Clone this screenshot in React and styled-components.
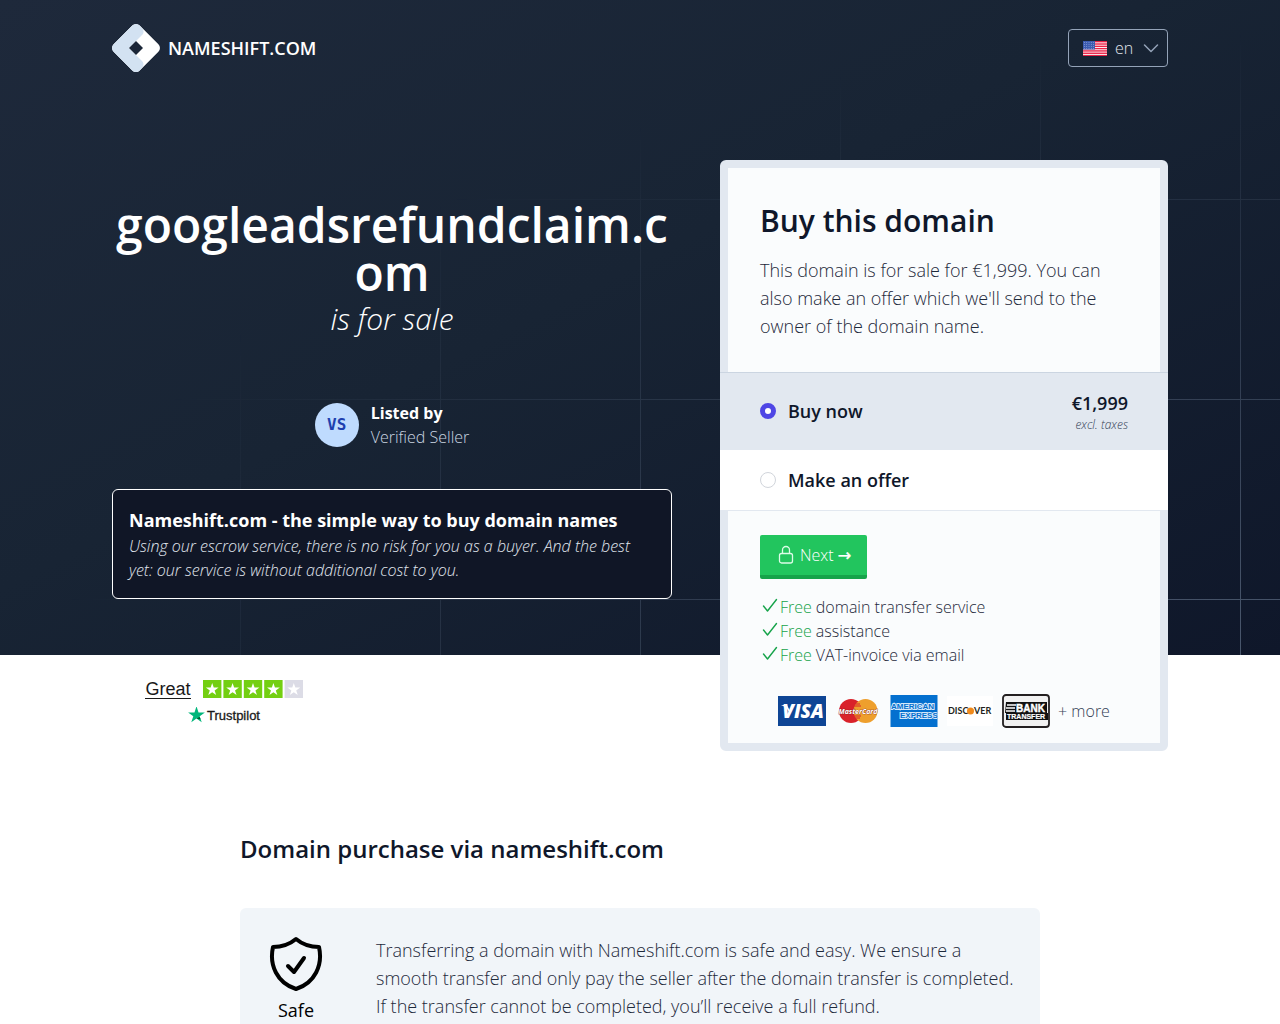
import React, { useState } from "react";
import styled, { createGlobalStyle } from "styled-components";

const GlobalStyle = createGlobalStyle`
  *, *::before, *::after {
    box-sizing: border-box;
  }
  body {
    margin: 0;
    background: #fff;
    color: #0f172a;
    font-family: "Open Sans", "Noto Sans", sans-serif;
    font-size: 16px;
    font-weight: 300;
    line-height: 24px;
  }
  h1, h2, h3, p, ul {
    margin: 0;
    padding: 0;
  }
`;

const Container = styled.div`
  max-width: 1120px;
  margin: 0 auto;
  padding: 0 32px;
`;

const Hero = styled.section`
  position: relative;
  background: linear-gradient(to bottom right, #1e293b, #182434 45%, #0f172a);

  &::before {
    content: "";
    position: absolute;
    inset: 0;
    background-image: linear-gradient(to right, #64748b 1px, transparent 1px),
      linear-gradient(to bottom, #64748b 1px, transparent 1px);
    background-size: 200px 200px;
    background-position: 40px 199px;
    mask-image: radial-gradient(100% 100% at bottom right, rgba(0, 0, 0, 0.7), transparent 95%);
  }
`;

const HeroContent = styled(Container)`
  position: relative;
`;

const Header = styled.header`
  display: flex;
  align-items: center;
  justify-content: space-between;
  height: 96px;
`;

const Brand = styled.a`
  display: flex;
  align-items: center;
  gap: 8px;
  color: #fff;
  font-size: 18px;
  font-weight: 600;
  text-decoration: none;
  text-transform: uppercase;
`;

const Language = styled.label`
  display: flex;
  align-items: center;
  width: 100px;
  height: 38px;
  padding: 0 8px 0 14px;
  border: 1px solid #94a3b8;
  border-radius: 4px;
  color: #cbd5e1;

  svg {
    flex: none;
  }
`;

const LanguageSelect = styled.select`
  flex: 1;
  min-width: 0;
  margin-left: 8px;
  padding: 0;
  border: 0;
  background: transparent;
  appearance: none;
  color: #e2e8f0;
  font: inherit;

  option {
    color: #0f172a;
  }
`;

const Columns = styled.div`
  display: grid;
  grid-template-columns: 5fr 4fr;
  gap: 48px;
  padding-top: 64px;

  @media (max-width: 900px) {
    grid-template-columns: 1fr;
  }
`;

const Pitch = styled.div`
  display: flex;
  flex-direction: column;
  align-items: center;
  min-width: 0;
  padding-top: 41px;
  color: #fff;
`;

const DomainName = styled.h1`
  width: 100%;
  font-size: 48px;
  font-weight: 600;
  line-height: 48px;
  text-align: center;
  word-break: break-all;
`;

const ForSale = styled.p`
  margin-top: 4px;
  font-size: 30px;
  font-style: italic;
  line-height: 36px;
`;

const Seller = styled.div`
  display: flex;
  align-items: center;
  gap: 12px;
  margin-top: 64px;
`;

const Avatar = styled.div`
  display: flex;
  align-items: center;
  justify-content: center;
  width: 44px;
  height: 44px;
  border-radius: 50%;
  background: #bfdbfe;
  color: #1e40af;
  font-family: "DejaVu Sans Mono", monospace;
  font-weight: 700;
`;

const SellerText = styled.div`
  color: #cbd5e1;

  strong {
    display: block;
    color: #fff;
    font-weight: 700;
  }
`;

const Notice = styled.div`
  width: 100%;
  margin-top: 40px;
  padding: 16px;
  border: 1px solid #fff;
  border-radius: 6px;
  background: #101626;

  h2 {
    font-size: 18px;
    font-weight: 700;
    line-height: 28px;
  }

  p {
    color: #e2e8f0;
    font-style: italic;
  }
`;

const Card = styled.form`
  margin-bottom: -96px;
  border: 8px solid #e2e8f0;
  border-radius: 6px;
  background: #fafcfd;
`;

const CardIntro = styled.div`
  padding: 32px;

  h2 {
    font-size: 30px;
    font-weight: 600;
    line-height: 42px;
  }

  p {
    margin-top: 14px;
    color: #1e293b;
    font-size: 18px;
    line-height: 28px;
  }
`;

const Options = styled.div`
  margin: 0 -8px;
  border-top: 1px solid #cbd5e1;
`;

const Option = styled.label`
  display: flex;
  align-items: center;
  gap: 12px;
  padding: 16px 40px;
  border-bottom: 1px solid #e2e8f0;
  background: ${props => (props.$active ? "#e2e8f0" : "#fff")};
  font-size: 18px;
  font-weight: 600;
  line-height: 28px;
  cursor: pointer;
`;

const Radio = styled.input`
  appearance: none;
  width: 16px;
  height: 16px;
  margin: 0;
  border: 1px solid #d1d5db;
  border-radius: 50%;
  background: #fff;

  &:checked {
    border: 5px solid #4f46e5;
  }
`;

const Price = styled.span`
  margin-left: auto;
  text-align: right;

  small {
    display: block;
    color: #334155;
    font-size: 12px;
    font-style: italic;
    font-weight: 300;
    line-height: 16px;
  }
`;

const CardFooter = styled.div`
  padding: 24px 32px 16px;
`;

const NextButton = styled.button`
  display: flex;
  align-items: center;
  gap: 6px;
  height: 44px;
  padding: 0 16px 0 18px;
  border: 0;
  border-bottom: 4px solid #16a34a;
  border-radius: 2px;
  background: #22c55e;
  color: #fff;
  font: inherit;
  cursor: pointer;
`;

const Arrow = styled.span`
  font-family: "DejaVu Sans", sans-serif;
  font-weight: 400;
  -webkit-text-stroke: 0.4px #fff;
`;

const Perks = styled.ul`
  margin-top: 16px;
  color: #1e293b;
  list-style: none;

  li {
    display: flex;
    gap: 4px;
  }

  svg {
    width: 16px;
    height: 20px;
    margin-left: 2px;
  }

  em {
    margin-left: -2px;
    color: #16a34a;
    font-style: normal;
  }
`;

const Payments = styled.div`
  display: flex;
  align-items: center;
  justify-content: center;
  gap: 8px;
  height: 32px;
  margin-top: 28px;
  color: #334155;

  svg {
    flex: none;
    overflow: visible;
  }
`;

const Trust = styled.a`
  display: flex;
  flex-direction: column;
  align-items: center;
  width: 224px;
  padding-top: 23px;
  color: #191919;
  font-family: "Liberation Sans", Arial, sans-serif;
  text-decoration: none;
`;

const TrustScore = styled.span`
  display: flex;
  align-items: center;
  gap: 12px;
  height: 22px;
  font-size: 18px;
  font-weight: 400;
  line-height: 18px;
`;

const TrustWord = styled.span`
  border-bottom: 1px solid #191919;
`;

const TrustLogo = styled.span`
  display: flex;
  align-items: center;
  gap: 2px;
  height: 20px;
  margin-top: 6px;
  font-size: 13px;
  font-weight: 400;
  -webkit-text-stroke: 0.3px #191919;
`;

const Details = styled.section`
  max-width: 864px;
  margin: 0 auto;
  padding: 107px 32px 0;

  h2 {
    font-size: 24px;
    font-weight: 600;
    line-height: 32px;
  }
`;

const Feature = styled.article`
  display: flex;
  gap: 48px;
  margin-top: 43px;
  padding: 28px 24px;
  border-radius: 6px;
  background: #f1f5f9;
  font-size: 18px;
  line-height: 28px;

  p {
    color: #1e293b;
  }
`;

const FeatureIcon = styled.div`
  display: flex;
  flex: none;
  flex-direction: column;
  align-items: center;
  gap: 4px;
  width: 64px;

  h3 {
    color: #000;
    font-size: 18px;
    font-weight: 400;
  }
`;

const Logo = () => (
  <svg width="48" height="48" viewBox="0 0 48 48" aria-hidden="true">
    <clipPath id="diamond">
      <rect x="5.5" y="5.5" width="37" height="37" rx="5.3" transform="rotate(45 24 24)" />
    </clipPath>
    <g clipPath="url(#diamond)">
      <path d="M0 0h48v48H0z" fill="#fff" />
      <path
        d="M24-3l6 7c2.5 3 1.500 5.500 0 7l-6 6-7 7 7 7 6 6c1.500 1.500 2.500 4 0 7l-6 7L-3 24z"
        fill="#d3e2f2"
      />
    </g>
    <path d="M24 17l7 7-7 7-7-7z" fill="#1b2638" />
  </svg>
);

const Flag = () => (
  <svg width="24" height="15" viewBox="0 0 24 15" aria-hidden="true">
    <path d="M0 0h24v15H0z" fill="#fff" />
    {[0, 2, 4, 6, 8, 10, 12].map(i => (
      <rect key={i} y={(i * 15) / 13} width="24" height="1.4" fill="#ea2146" />
    ))}
    <path d="M0 0h12v8.500H0z" fill="#3c5bb0" />
    {[1.5, 3.5, 5.5, 7.5].map(y =>
      [1.5, 3.75, 6, 8.25, 10.5].map(x => (
        <circle key={`${x}-${y}`} cx={x} cy={y} r=".4" fill="#c5d0ec" />
      ))
    )}
  </svg>
);

const ChevronDown = () => (
  <svg width="16" height="16" viewBox="0 0 16 16" fill="none" stroke="#94a3b8" strokeWidth="1.500" strokeLinecap="round" strokeLinejoin="round">
    <path d="M1.500 5L8 11.500 14.500 5" />
  </svg>
);

const Lock = () => (
  <svg width="16" height="20" viewBox="0 0 16 20" fill="none" stroke="#dcfce7" strokeWidth="1.300" strokeLinejoin="round" aria-hidden="true">
    <rect x="1.500" y="8.500" width="13" height="9.500" rx="2" />
    <path d="M4.500 8.500V5a3.500 3.500 0 0 1 7 0v3.500" />
  </svg>
);

const Check = () => (
  <svg viewBox="0 0 16 20" fill="none" stroke="#16a34a" strokeWidth="1.400" strokeLinecap="round" strokeLinejoin="round" aria-hidden="true">
    <path d="M1.500 11l4 5L14.500 4.500" />
  </svg>
);

const Visa = () => (
  <svg width="48" height="30" viewBox="0 0 48 30" role="img" aria-label="Visa">
    <path d="M0 0h48v30H0z" fill="#0e4595" />
    <path d="M3 9h6l3 6-1 1C9 12 6 10 3 9z" fill="#fff" />
    <text x="25" y="22" fill="#fff" fontFamily="Open Sans" fontSize="19" fontStyle="italic" fontWeight="800" textAnchor="middle">
      VISA
    </text>
  </svg>
);

const MasterCard = () => (
  <svg width="48" height="32" viewBox="0 0 48 32" role="img" aria-label="MasterCard">
    <circle cx="17" cy="16" r="12" fill="#d9222a" />
    <circle cx="31.500" cy="16" r="12" fill="#ee9f2d" />
    <path d="M21 9h5M20 11h7M20 21h7M21 23h5" stroke="#d9222a" strokeWidth="1" />
    <text x="24" y="19" fill="#fff" stroke="#7d1a1c" strokeWidth=".6" paintOrder="stroke" fontFamily="Open Sans" fontSize="7" fontStyle="italic" fontWeight="700" textAnchor="middle">
      MasterCard
    </text>
  </svg>
);

const Amex = () => (
  <svg width="48" height="32" viewBox="0 0 48 32" role="img" aria-label="American Express">
    <clipPath id="amex">
      <path d="M.5 0h47v32H.5z" />
    </clipPath>
    <g clipPath="url(#amex)" fill="#0470cf" stroke="#d5e8fa" strokeWidth="2" paintOrder="stroke" fontFamily="Liberation Sans" fontSize="8" fontWeight="700">
      <path d="M0 0h48v32H0z" stroke="none" />
      <text x="1" y="14">AMERICAN</text>
      <text x="10" y="23">EXPRESS</text>
    </g>
  </svg>
);

const Discover = () => (
  <svg width="48" height="30" viewBox="0 0 48 30" role="img" aria-label="Discover">
    <path d="M1 0h46v30H1z" fill="#fff" />
    <g fill="#231f20" fontFamily="Lato" fontSize="9" fontWeight="700">
      <text x="2" y="18">DISC</text>
      <circle cx="24.500" cy="15" r="3.500" fill="#f08a1c" />
      <text x="28" y="18">VER</text>
    </g>
  </svg>
);

const BankTransfer = () => (
  <svg width="48" height="34" viewBox="0 0 48 34" role="img" aria-label="Bank transfer">
    <rect x="1" y="1" width="46" height="32" rx="3" fill="#f1f1f1" stroke="#231f20" strokeWidth="1.800" />
    <path d="M4 8h41v11h1v7H4v-7H3z" fill="#111" />
    <path d="M5 11h9M4 14h9M4 17h9" stroke="#fff" strokeWidth="1.300" />
    <g fill="#fff" fontFamily="Liberation Sans" fontWeight="700">
      <text x="14" y="18" fontSize="10" stroke="#fff" strokeWidth=".4">BANK</text>
      <text x="5" y="25" fontSize="7" stroke="#fff" strokeWidth=".2">TRANSFER</text>
    </g>
  </svg>
);

const starPath = "M0-6l1.400 4.200h4.400L2.200.8l1.400 4.200L0 2.400-3.600 5l1.400-4.200-3.600-2.600h4.400z";

const Stars = () => (
  <svg width="100" height="18" viewBox="0 0 100 18" role="img" aria-label="4 out of 5 stars">
    {[0, 1, 2, 3, 4].map(i => (
      <g key={i} transform={`translate(${i * 20.4} 0)`}>
        <path d="M0 0h18.400v18H0z" fill={i < 4 ? "#73cf11" : "#dcdce6"} />
        <path d={starPath} fill="#fff" transform="translate(9.200 9.500) scale(1.100)" />
      </g>
    ))}
  </svg>
);

const TrustStar = () => (
  <svg width="17" height="18" viewBox="0 0 17 18" aria-hidden="true">
    <path d={starPath} fill="#00b67a" transform="translate(8.500 8) scale(1.450)" />
    <path d="M11.700 10l.8 2.200-4-.6z" fill="#005128" />
  </svg>
);

const Shield = () => (
  <svg width="56" height="56" viewBox="0 0 56 56" fill="none" stroke="#000" strokeWidth="4" strokeLinecap="round" strokeLinejoin="round" aria-hidden="true">
    <path d="M28 3C22 8 15 11 5 11 1 29 9 47 28 53c19-6 27-24 23-42C41 11 34 8 28 3z" />
    <path d="M20 30l6 6 10-14" />
  </svg>
);

const perks = ["domain transfer service", "assistance", "VAT-invoice via email"];

const App = () => {
  const [choice, setChoice] = useState("buy");

  return (
    <>
      <GlobalStyle />
      <Hero>
        <HeroContent>
          <Header>
            <Brand href="#home">
              <Logo />
              Nameshift.com
            </Brand>
            <Language>
              <Flag />
              <LanguageSelect aria-label="Language" defaultValue="en">
                <option value="en">en</option>
                <option value="nl">nl</option>
                <option value="de">de</option>
              </LanguageSelect>
              <ChevronDown />
            </Language>
          </Header>
          <Columns>
            <Pitch>
              <DomainName>googleadsrefundclaim.com</DomainName>
              <ForSale>is for sale</ForSale>
              <Seller>
                <Avatar>VS</Avatar>
                <SellerText>
                  <strong>Listed by</strong>
                  Verified Seller
                </SellerText>
              </Seller>
              <Notice>
                <h2>Nameshift.com - the simple way to buy domain names</h2>
                <p>
                  Using our escrow service, there is no risk for you as a buyer.
                  And the best yet: our service is without additional cost to
                  you.
                </p>
              </Notice>
            </Pitch>
            <Card onSubmit={e => e.preventDefault()}>
              <CardIntro>
                <h2>Buy this domain</h2>
                <p>
                  This domain is for sale for €1,999. You can also make an offer
                  which we'll send to the owner of the domain name.
                </p>
              </CardIntro>
              <Options>
                <Option $active={choice === "buy"}>
                  <Radio
                    type="radio"
                    name="choice"
                    checked={choice === "buy"}
                    onChange={() => setChoice("buy")}
                  />
                  Buy now
                  <Price>
                    €1,999
                    <small>excl. taxes</small>
                  </Price>
                </Option>
                <Option $active={choice === "offer"}>
                  <Radio
                    type="radio"
                    name="choice"
                    checked={choice === "offer"}
                    onChange={() => setChoice("offer")}
                  />
                  Make an offer
                </Option>
              </Options>
              <CardFooter>
                <NextButton type="submit">
                  <Lock />
                  <span>
                    Next <Arrow>→</Arrow>
                  </span>
                </NextButton>
                <Perks>
                  {perks.map(perk => (
                    <li key={perk}>
                      <Check />
                      <em>Free</em>
                      {perk}
                    </li>
                  ))}
                </Perks>
                <Payments>
                  <Visa />
                  <MasterCard />
                  <Amex />
                  <Discover />
                  <BankTransfer />
                  <span>+ more</span>
                </Payments>
              </CardFooter>
            </Card>
          </Columns>
        </HeroContent>
      </Hero>
      <Container>
        <Trust href="#reviews">
          <TrustScore>
            <TrustWord>Great</TrustWord>
            <Stars />
          </TrustScore>
          <TrustLogo>
            <TrustStar />
            Trustpilot
          </TrustLogo>
        </Trust>
      </Container>
      <Details>
        <h2>Domain purchase via nameshift.com</h2>
        <Feature>
          <FeatureIcon>
            <Shield />
            <h3>Safe</h3>
          </FeatureIcon>
          <p>
            Transferring a domain with Nameshift.com is safe and easy. We ensure
            a smooth transfer and only pay the seller after the domain transfer
            is completed. If the transfer cannot be completed, you’ll receive a
            full refund.
          </p>
        </Feature>
      </Details>
    </>
  );
};

export default App;
